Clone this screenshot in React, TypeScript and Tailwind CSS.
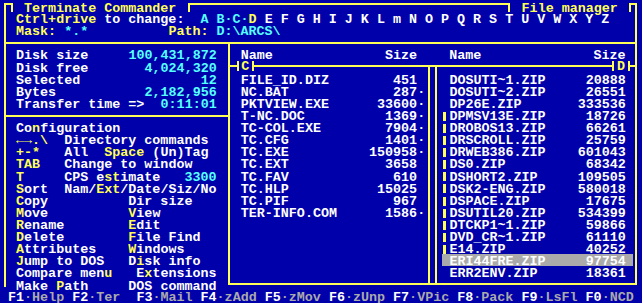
import React from 'react'

type Seg = [string, string]

const Y = 'text-[#ffff55]'
const W = 'text-white'
const C = 'text-[#55ffff]'
const G = 'text-[#aaaaaa]'

function Line({ segs, className = '' }: { segs: Seg[]; className?: string }) {
  return (
    <div className={`h-[12.12px] leading-[16.7px] whitespace-pre ${className}`}>
      {segs.map(([t, c], i) => (
        <span key={i} className={c}>
          {t}
        </span>
      ))}
    </div>
  )
}

const info: [string, string][] = [
  ['Disk size', '100,431,872'],
  ['Disk free', '4,024,320'],
  ['Selected', '12'],
  ['Bytes', '2,182,956'],
  ['Transfer time =>', '0:11:01'],
]

const menu: Seg[][] = [
  [['Co', W], ['n', Y], ['figuration', W]],
  [['←→.\\', Y], ['  Directory commands', W]],
  [['+-*', Y], ['   All  ', W], ['Space', Y], [' (Un)Tag', W]],
  [['TAB', Y], ['   Change to window', W]],
  [['T', Y], ['     CPS e', W], ['st', Y], ['imate   ', W], ['3300', C]],
  [['S', Y], ['ort  Nam/', W], ['Ext', Y], ['/Date/Siz/No', W]],
  [['C', Y], ['opy          Dir size', W]],
  [['M', Y], ['ove          ', W], ['V', Y], ['iew', W]],
  [['R', Y], ['ename        ', W], ['E', Y], ['dit', W]],
  [['D', Y], ['elete        ', W], ['F', Y], ['ile Find', W]],
  [['A', Y], ['ttributes    ', W], ['W', Y], ['indows', W]],
  [['J', Y], ['ump to DOS   D', W], ['i', Y], ['sk info', W]],
  [['Compare men', W], ['u', Y], ['   E', W], ['x', Y], ['tensions', W]],
  [['Make ', W], ['P', Y], ['ath     DOS command', W]],
]

const leftFiles: [string, string, boolean][] = [
  ['FILE_ID.DIZ', '451', false],
  ['NC.BAT', '287', true],
  ['PKTVIEW.EXE', '33600', true],
  ['T-NC.DOC', '1369', true],
  ['TC-COL.EXE', '7904', true],
  ['TC.CFG', '1401', true],
  ['TC.EXE', '150958', true],
  ['TC.EXT', '3658', false],
  ['TC.FAV', '610', false],
  ['TC.HLP', '15025', false],
  ['TC.PIF', '967', false],
  ['TER-INFO.COM', '1586', true],
]

const rightFiles: [string, string, boolean][] = [
  ['DOSUTI~1.ZIP', '20888', false],
  ['DOSUTI~2.ZIP', '26551', false],
  ['DP26E.ZIP', '333536', false],
  ['DPMSV13E.ZIP', '18726', true],
  ['DROBOS13.ZIP', '66261', true],
  ['DRSCROLL.ZIP', '25759', true],
  ['DRWEB386.ZIP', '601043', true],
  ['DS0.ZIP', '68342', true],
  ['DSHORT2.ZIP', '109505', true],
  ['DSK2-ENG.ZIP', '580018', true],
  ['DSPACE.ZIP', '17675', true],
  ['DSUTIL20.ZIP', '534399', true],
  ['DTCKP1~1.ZIP', '59866', true],
  ['DVD_CR~1.ZIP', '61110', true],
  ['E14.ZIP', '40252', true],
  ['ERI44FRE.ZIP', '97754', false],
  ['ERR2ENV.ZIP', '18361', false],
]

const keys: [string, string][] = [
  ['F1', 'Help'],
  ['F2', 'Ter'],
  ['F3', 'Mail'],
  ['F4', 'zAdd'],
  ['F5', 'zMov'],
  ['F6', 'zUnp'],
  ['F7', 'VPic'],
  ['F8', 'Pack'],
  ['F9', 'LsFl'],
  ['F0', 'NCD'],
]

const row = (name: string, size: string) => name.padEnd(22 - size.length) + size

export default function App() {
  const footer: Seg[] = [[' ', W]]
  keys.forEach(([k, label], i) => {
    footer.push([k, W], ['·' + label, G])
    if (i < keys.length - 1) footer.push([i === 1 ? '  ' : ' ', W])
  })

  return (
    <div className="w-[642px] h-[303px] overflow-hidden bg-[#0000aa] font-['Liberation_Mono',monospace] font-bold text-[13.375px] flex flex-col">
      {/* header frame */}
      <div className="mt-[3px] ml-[4px] w-[633px] h-[39px] shrink-0 border-x-2 border-[#ffff55]">
        <div className="flex h-[9.12px]">
          <div className="w-[5px] border-t-2 border-[#ffff55]" />
          <div className="w-[179px] border-x-2 border-[#ffff55] pl-[11px] leading-[12px] text-[#ffff55] whitespace-pre">
            Terminate Commander
          </div>
          <div className="flex-1 border-t-2 border-[#ffff55]" />
          <div className="w-[122.5px] border-x-2 border-[#ffff55] pl-[11.6px] leading-[12px] text-[#ffff55] whitespace-pre">
            File manager
          </div>
          <div className="w-[4.5px] border-t-2 border-[#ffff55]" />
        </div>
        <Line
          className="pl-[10.05px]"
          segs={[
            ['Ctrl+drive', Y],
            [' to change:  ', W],
            ['A', C],
            [' ', W],
            ['B·C·', C],
            ['D', Y],
            [' E F G H I J K L m N O P Q R S T U V W X Y Z', W],
          ]}
        />
        <Line
          className="pl-[10.05px]"
          segs={[
            ['Mask: ', Y],
            ['*.*', C],
            ['          Path: ', Y],
            ['D:\\ARCS\\', C],
          ]}
        />
      </div>

      {/* body */}
      <div className="flex items-start shrink-0">
        {/* info panel */}
        <div className="ml-[4px] w-[224px] h-[245px] shrink-0 border-l-2 border-t-2 border-[#ffff55] pt-[4.48px]">
          {info.map(([label, value]) => (
            <div key={label} className="flex justify-between h-[12.12px] leading-[16.7px] whitespace-pre pl-[10.05px] pr-[11.3px]">
              <span className={W}>{label}</span>
              <span className={C}>{value}</span>
            </div>
          ))}
          <div className="mt-[6px] border-t-2 border-[#ffff55] pt-[4.12px]">
            {menu.map((segs, i) => (
              <Line key={i} className="pl-[10.05px]" segs={segs} />
            ))}
          </div>
        </div>

        {/* file panels */}
        <div className="w-[409px] h-[243px] shrink-0 border-2 border-[#ffff55] flex flex-col">
          <Line
            className="mt-[4.48px] pl-[10.75px]"
            segs={[['Name              Size    Name              Size', W]]}
          />
          <div className="mt-[4.4px] flex flex-1">
            <div className="w-[200px] border-t-2 border-r-2 border-[#ffff55] flex flex-col">
              <div className="self-start ml-[6.5px] -mt-[6.3px] w-[17.5px] h-[10px] border-x-2 border-[#ffff55] bg-[#0000aa] text-center leading-[12.3px] text-[#ffff55]">
                C
              </div>
              <div className="mt-[2.02px]">
                {leftFiles.map(([name, size, dot]) => (
                  <div key={name} className="h-[12.12px] leading-[16.7px] whitespace-pre pl-[10.75px] text-white">
                    {row(name, size)}
                    {dot ? '·' : ' '}
                  </div>
                ))}
              </div>
            </div>
            <div className="w-[5px] border-t-2 border-[#ffff55]" />
            <div className="w-[200px] border-t-2 border-l-2 border-[#ffff55] flex flex-col">
              <div className="self-end mr-[5px] -mt-[6.3px] w-[18px] h-[10px] border-x-2 border-[#ffff55] bg-[#0000aa] text-center leading-[12.3px] text-[#ffff55]">
                D
              </div>
              <div className="mt-[2.02px]">
                {rightFiles.map(([name, size, tag]) => (
                  <div
                    key={name}
                    className={`flex h-[12.12px] ml-[4.7px] mr-[2.3px] ${name === 'ERI44FRE.ZIP' ? 'bg-[#aaaaaa]' : ''}`}
                  >
                    <div className="w-[7.7px] shrink-0">
                      {tag && <div className="ml-[1.3px] mt-[2.8px] w-[3px] h-[9px] bg-[#ffff55]" />}
                    </div>
                    <div className="leading-[16.7px] whitespace-pre text-white">{row(name, size)}</div>
                  </div>
                ))}
              </div>
            </div>
          </div>
        </div>
      </div>

      {/* function keys */}
      <Line className="mt-[2.5px]" segs={footer} />
    </div>
  )
}
